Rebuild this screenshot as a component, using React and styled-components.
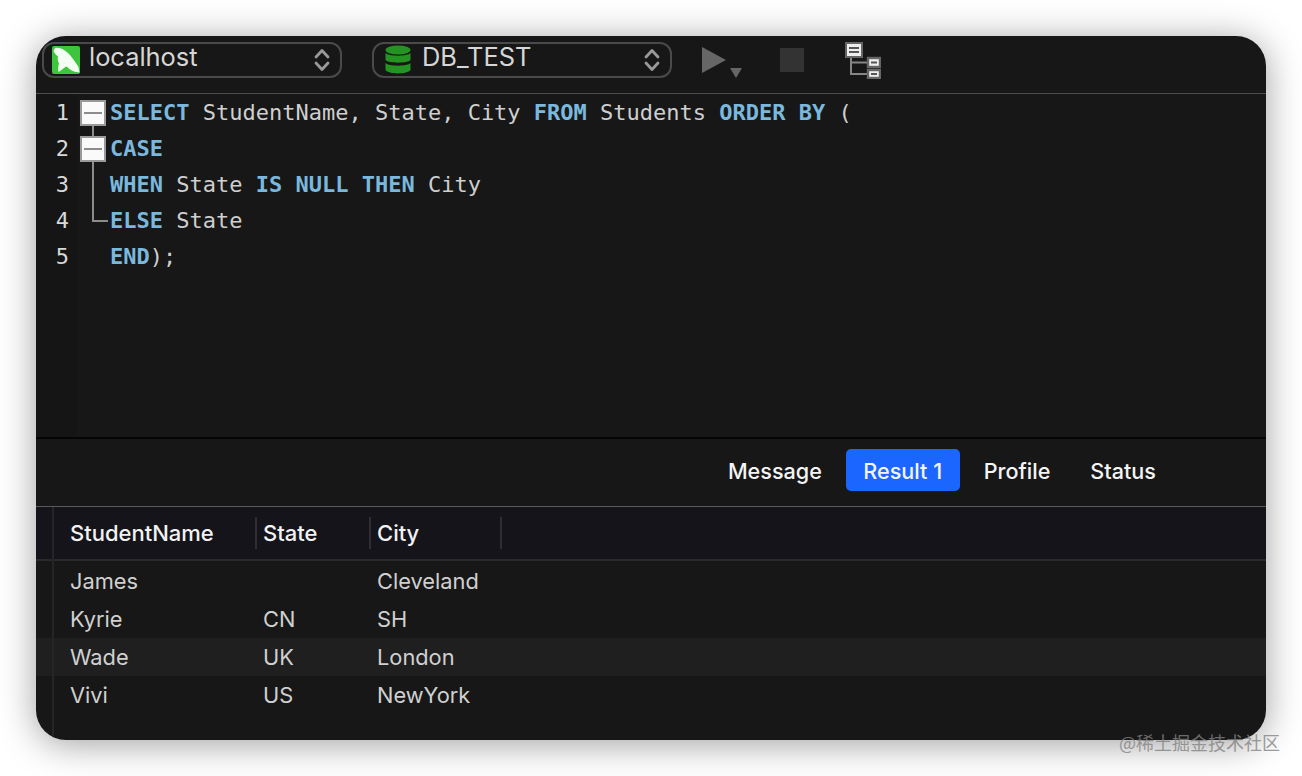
import React from 'react';
import styled, { createGlobalStyle } from 'styled-components';

const uiFont = `Inter, "Liberation Sans", sans-serif`;

const GlobalStyle = createGlobalStyle`
    html, body {
        margin: 0;
        height: 100%;
        background: #fff;
        overflow: hidden;
    }
`;

const Page = styled.div`
    position: relative;
    width: 1302px;
    height: 776px;
    padding: 36px;
    box-sizing: border-box;
    font-family: ${uiFont};
`;

const Win = styled.div`
    width: 1230px;
    height: 704px;
    border-radius: 30px;
    background: #171717;
    overflow: hidden;
    box-shadow: 0 4px 36px rgba(0, 0, 0, 0.38);
    display: flex;
    flex-direction: column;
`;

const Toolbar = styled.div`
    box-sizing: border-box;
    height: 58px;
    flex: none;
    border-bottom: 1px solid #4d4d4d;
    display: flex;
    align-items: flex-start;
    padding: 6px 0 0 6px;
`;

const Picker = styled.div`
    box-sizing: border-box;
    width: ${p => p.$w}px;
    height: 36px;
    margin-right: 30px;
    border: 2px solid #4a4a4a;
    border-radius: 12px;
    display: flex;
    align-items: center;
    padding: 0 10px 0 ${p => p.$pl}px;
    color: #d6d6d6;
    font-size: 25.4px;
    line-height: 30px;
`;

const PickerText = styled.span`
    flex: 1;
    margin-left: ${p => p.$ml}px;
    margin-top: -7px;
`;

const ToolIcon = styled.svg`
    flex: none;
    display: block;
    margin-left: ${p => p.$ml || 0}px;
    margin-top: ${p => p.$mt || 0}px;
`;

const Editor = styled.div`
    height: 343px;
    flex: none;
    border-bottom: 2px solid #050505;
    background: linear-gradient(to right, #151515 41px, #171717 41px);
    font-family: "DejaVu Sans Mono", "Liberation Mono", monospace;
    font-size: 22px;
    color: #cfcfcf;
`;

const Line = styled.div`
    display: flex;
    height: 36px;
    line-height: 38px;
    white-space: pre;
`;

const LineNo = styled.span`
    width: 33px;
    padding-right: 8px;
    text-align: right;
    color: #d8d8d8;
`;

const FoldCell = styled.span`
    position: relative;
    width: 33px;
    flex: none;
    display: flex;
    align-items: center;
    justify-content: center;

    &::before {
        content: ${p => (p.$line ? '""' : 'none')};
        position: absolute;
        left: 15px;
        top: ${p => (p.$line === 'top' ? '18px' : '-10px')};
        height: ${p => (p.$line === 'end' ? '30px' : p.$line === 'top' ? '18px' : '46px')};
        width: 2px;
        background: #8c8c8c;
    }

    &::after {
        content: ${p => (p.$line === 'end' ? '""' : 'none')};
        position: absolute;
        left: 15px;
        top: 18px;
        width: 16px;
        height: 2px;
        background: #8c8c8c;
    }
`;

const FoldBox = styled.span`
    position: relative;
    z-index: 1;
    box-sizing: border-box;
    width: 26px;
    height: 26px;
    margin: 2px 2px 0 0;
    border: 2px solid #9a9a9a;
    background: #fafafa;
    display: flex;
    align-items: center;
    justify-content: center;

    &::before {
        content: "";
        width: 18px;
        height: 2px;
        background: #8c8c8c;
    }
`;

const Keyword = styled.b`
    color: #7ab8de;
    font-weight: 700;
`;

const Tabs = styled.div`
    box-sizing: border-box;
    height: 68px;
    flex: none;
    border-bottom: 1px solid #5a5a5a;
    display: flex;
    align-items: flex-start;
    justify-content: flex-end;
    gap: 8px;
    padding: 10px 94px 0 0;
`;

const Tab = styled.div`
    height: 42px;
    line-height: 44px;
    padding: 0 ${p => (p.$active ? 17.5 : 16)}px;
    border-radius: 5px;
    font-size: 21.6px;
    font-weight: 500;
    color: #f4f4f4;
    background: ${p => (p.$active ? '#1a66ff' : 'transparent')};
`;

const ResultGrid = styled.div`
    flex: 1;
    position: relative;
`;

const Cols = styled.div`
    display: grid;
    grid-template-columns: 17px 185px 114px 131px 1fr;
    padding-left: 17px;
`;

const HeadRow = styled(Cols)`
    height: 52px;
    align-items: center;
    background: #14141a;
    border-bottom: 2px solid #2a2a2e;
`;

const HeadCell = styled.div`
    height: 32px;
    line-height: 32px;
    padding-left: ${p => (p.$first ? 0 : 6)}px;
    border-left: ${p => (p.$first ? 'none' : '2px solid #2e2e33')};
    color: #f2f2f2;
    font-size: 22px;
    font-weight: 500;
`;

const Row = styled(Cols)`
    height: 38px;
    line-height: 38px;
    background: ${p => (p.$stripe ? '#1f1f1f' : 'transparent')};
    color: #d0d0d0;
    font-size: 21.8px;
`;

const Cell = styled.div`
    padding-left: ${p => (p.$first ? 0 : 8)}px;
`;

const Rows = styled.div`
    padding-top: 1px;
`;

const GridRule = styled.div`
    position: absolute;
    left: 16px;
    top: 0;
    bottom: 0;
    width: 2px;
    background: #252528;
`;

const Watermark = styled.div`
    position: absolute;
    right: 22px;
    bottom: 24px;
    font-family: "Noto Sans CJK SC", sans-serif;
    font-size: 18px;
    line-height: 20px;
    color: rgba(130, 130, 130, 0.8);
`;

const Chevrons = () => (
    <ToolIcon width="16" height="24" viewBox="0 0 16 24" fill="none" stroke="#999" strokeWidth="2.8" strokeLinecap="round" strokeLinejoin="round">
        <path d="M2 9 L8 2.5 L14 9" />
        <path d="M2 15 L8 21.5 L14 15" />
    </ToolIcon>
);

// rough dolphin, the app's logo
const Dolphin = () => (
    <ToolIcon width="28" height="28" viewBox="0 0 28 28">
        <rect width="28" height="28" rx="2" fill="#3dc63d" />
        <path d="M3 2 C6 1.5 9 2.5 12 4 C16 6.5 19 10 21 13 C23 16 25 18 26.5 21 L27.5 26.5 C24 26 21 25.5 19 24 C17 22.5 15.5 21 14 20.5 C12 22 9 24.5 6.5 26 C6 23 6 20 7 17.5 C5.5 15 5.5 12 6 10.5 C4 9 2 6.5 1.5 5 Z" fill="#f4fff4" />
    </ToolIcon>
);

const Database = () => (
    <ToolIcon width="26" height="30" viewBox="0 0 26 30" fill="#259321">
        <ellipse cx="13" cy="5" rx="12.5" ry="4.5" />
        <path d="M0.5 8 C3 11.5 23 11.5 25.5 8 V15 C23 18.5 3 18.5 0.5 15 Z" />
        <path d="M0.5 18 C3 21.5 23 21.5 25.5 18 V25 C23 29.5 3 29.5 0.5 25 Z" />
    </ToolIcon>
);

const RunIcon = () => (
    <ToolIcon $mt={5} width="42" height="32" viewBox="0 0 42 32" fill="#666">
        <path d="M0 0 L24 13 L0 26 Z" />
        <path d="M28 21 L40 21 L34 31 Z" />
    </ToolIcon>
);

const StopIcon = () => (
    <ToolIcon $ml={36} $mt={6} width="24" height="24" viewBox="0 0 24 24">
        <rect width="24" height="24" fill="#333" />
    </ToolIcon>
);

const TreeIcon = () => (
    <ToolIcon $ml={41} width="36" height="37" viewBox="0 0 36 37">
        <path d="M6 16 V32 H23 M6 20.5 H23" fill="none" stroke="#868686" strokeWidth="2" />
        <rect x="1" y="1" width="16" height="14" fill="#eee" stroke="#666" strokeWidth="2" />
        <path d="M4 6 H14 M4 10 H14" stroke="#555" strokeWidth="2" />
        <rect x="23" y="16" width="12" height="9" fill="#eee" stroke="#666" strokeWidth="2.4" />
        <path d="M26 20.5 H32" stroke="#555" strokeWidth="2" />
        <rect x="23" y="28" width="12" height="8" fill="#eee" stroke="#666" strokeWidth="2.4" />
        <path d="M26 32 H32" stroke="#555" strokeWidth="2" />
    </ToolIcon>
);

const students = [
    ['James', '', 'Cleveland'],
    ['Kyrie', 'CN', 'SH'],
    ['Wade', 'UK', 'London'],
    ['Vivi', 'US', 'NewYork'],
];

const App = () => {
    return (
        <Page>
            <GlobalStyle />
            <Win>
                <Toolbar>
                    <Picker $w={300} $pl={8}>
                        <Dolphin />
                        <PickerText $ml={9}>localhost</PickerText>
                        <Chevrons />
                    </Picker>
                    <Picker $w={300} $pl={11}>
                        <Database />
                        <PickerText $ml={11}>DB_TEST</PickerText>
                        <Chevrons />
                    </Picker>
                    <RunIcon />
                    <StopIcon />
                    <TreeIcon />
                </Toolbar>
                <Editor>
                    <Line>
                        <LineNo>1</LineNo>
                        <FoldCell $line="top"><FoldBox /></FoldCell>
                        <span><Keyword>SELECT</Keyword> StudentName, State, City <Keyword>FROM</Keyword> Students <Keyword>ORDER BY</Keyword> (</span>
                    </Line>
                    <Line>
                        <LineNo>2</LineNo>
                        <FoldCell $line="full"><FoldBox /></FoldCell>
                        <span><Keyword>CASE</Keyword></span>
                    </Line>
                    <Line>
                        <LineNo>3</LineNo>
                        <FoldCell $line="full" />
                        <span><Keyword>WHEN</Keyword> State <Keyword>IS NULL THEN</Keyword> City</span>
                    </Line>
                    <Line>
                        <LineNo>4</LineNo>
                        <FoldCell $line="end" />
                        <span><Keyword>ELSE</Keyword> State</span>
                    </Line>
                    <Line>
                        <LineNo>5</LineNo>
                        <FoldCell />
                        <span><Keyword>END</Keyword>);</span>
                    </Line>
                </Editor>
                <Tabs>
                    <Tab>Message</Tab>
                    <Tab $active>Result 1</Tab>
                    <Tab>Profile</Tab>
                    <Tab>Status</Tab>
                </Tabs>
                <ResultGrid>
                    <GridRule />
                    <HeadRow>
                        <span />
                        <HeadCell $first>StudentName</HeadCell>
                        <HeadCell>State</HeadCell>
                        <HeadCell>City</HeadCell>
                        <HeadCell />
                    </HeadRow>
                    <Rows>
                        {students.map((s, i) => (
                            <Row key={s[0]} $stripe={i === 2}>
                                <span />
                                <Cell $first>{s[0]}</Cell>
                                <Cell>{s[1]}</Cell>
                                <Cell>{s[2]}</Cell>
                            </Row>
                        ))}
                    </Rows>
                </ResultGrid>
            </Win>
            <Watermark>@稀土掘金技术社区</Watermark>
        </Page>
    );
};

export default App;
